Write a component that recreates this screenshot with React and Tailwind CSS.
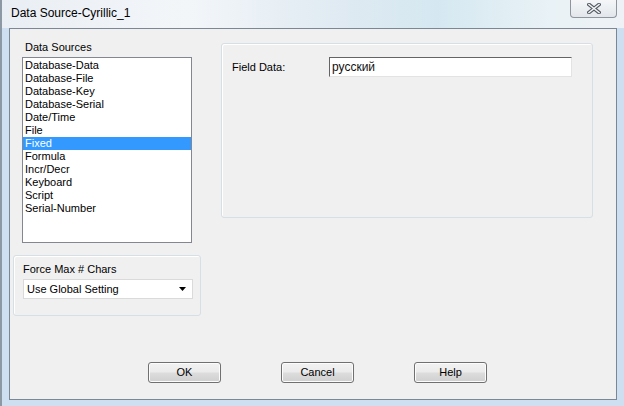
const sources = [
  "Database-Data",
  "Database-File",
  "Database-Key",
  "Database-Serial",
  "Date/Time",
  "File",
  "Fixed",
  "Formula",
  "Incr/Decr",
  "Keyboard",
  "Script",
  "Serial-Number",
]

function Button({ children }) {
  return (
    <button className="w-[73px] h-[21px] rounded-[3px] border border-[#707070] bg-[linear-gradient(180deg,#f2f2f2_0%,#ebebeb_48%,#dddddd_52%,#cfcfcf_100%)] text-[11px] leading-[13px] text-black shadow-[inset_0_0_0_1px_#fcfcfc]">
      {children}
    </button>
  )
}

export default function App() {
  return (
    <div className="w-[624px] h-[406px] flex flex-col overflow-hidden bg-[#cddff0] font-['Liberation_Sans',Arial,sans-serif] border-l-2 border-[#8c98a4]">
      {/* Title bar */}
      <div className="h-[28px] -ml-[2px] pl-[11px] flex items-start bg-[linear-gradient(90deg,#e9eef4_0%,#f3f6f9_30%,#dfeaf2_55%,#d5e8f1_70%,#e9f2f6_88%,#eef2f6_100%)]">
        <span className="pt-[6px] text-[12px] leading-[15px] text-black">Data Source-Cyrillic_1</span>
        <div className="ml-auto mr-[7px] w-[47px] h-[18px] rounded-b-[4px] border border-t-0 border-[#8e959c] bg-[linear-gradient(180deg,#f4f6f8_0%,#eceff2_50%,#e2e6ea_100%)] flex items-center justify-center">
          <svg width="14" height="11" viewBox="0 0 14 11">
            <path d="M2 1.5 L12 9.5 M12 1.5 L2 9.5" stroke="#535a62" strokeWidth="3.6" strokeLinecap="square" />
            <path d="M2 1.5 L12 9.5 M12 1.5 L2 9.5" stroke="#f3f5f7" strokeWidth="1.6" strokeLinecap="square" />
          </svg>
        </div>
      </div>

      {/* Window body */}
      <div className="flex">
        <div className="ml-[7px] w-[608px] h-[372px] border border-[#7b8794] bg-[#f0f0f0] flex flex-col text-[11px] leading-[13px] text-black">
          <div className="flex pl-[3px]">
            {/* Left column */}
            <div className="w-[188px] flex flex-col">
              <div className="mt-[12px] pl-[12px]">Data Sources</div>
              <div className="mt-[3px] ml-[9px] w-[170px] h-[186px] border border-[#828790] bg-white pt-[1px]">
                {sources.map(s => (
                  <div
                    key={s}
                    className={s === "Fixed" ? "h-[13px] pl-[2px] bg-[#3399ff] text-white" : "h-[13px] pl-[2px]"}
                  >
                    {s}
                  </div>
                ))}
              </div>

              <div className="mt-[12px] h-[61px] rounded-[3px] border border-[#d5dfe5] shadow-[inset_1px_1px_0_#fff] pt-[7px] pl-[9px]">
                <div>Force Max # Chars</div>
                <div className="mt-[3px] w-[170px] h-[20px] border border-[#dadada] bg-white flex items-center pl-[3px] pr-[5px]">
                  <span>Use Global Setting</span>
                  <svg className="ml-auto" width="8" height="5" viewBox="0 0 8 5">
                    <path d="M0 0 H7 L3.5 4 Z" fill="#000" />
                  </svg>
                </div>
              </div>
            </div>

            {/* Right group */}
            <div className="ml-[20px] mt-[14px] w-[372px] h-[175px] rounded-[3px] border border-[#d5dfe5] shadow-[inset_1px_1px_0_#fff] pt-[13px] pl-[10px]">
              <div className="flex items-center">
                <span className="w-[97px]">Field Data:</span>
                <div className="w-[243px] h-[20px] border border-t-[#646464] border-l-[#646464] border-b-[#e3e3e3] border-r-[#e3e3e3] bg-white flex items-center pl-[2px]">
                  <span className="text-[12px] leading-[15px] text-[#111]">русский</span>
                </div>
              </div>
            </div>
          </div>

          {/* Buttons */}
          <div className="mt-auto mb-[16px] pl-[138px] flex gap-[60px]">
            <Button>OK</Button>
            <Button>Cancel</Button>
            <Button>Help</Button>
          </div>
        </div>
      </div>
    </div>
  )
}
